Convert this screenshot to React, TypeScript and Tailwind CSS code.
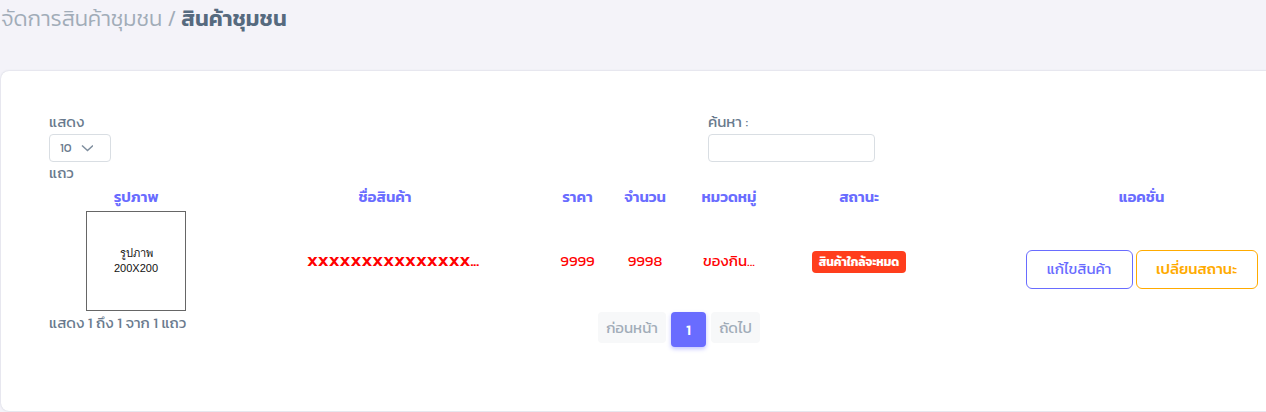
const headings = ['รูปภาพ', 'ชื่อสินค้า', 'ราคา', 'จำนวน', 'หมวดหมู่', 'สถานะ', 'แอคชั่น'];

export default function App() {
  return (
    <div className="min-h-screen overflow-hidden bg-[#f4f3f9] font-['Kanit','Noto_Sans_Thai','Noto_Sans',sans-serif] text-[15px] leading-[23px] text-[#697a8d]">
      <h1 className="mb-[33px] whitespace-nowrap pl-px text-[22px] leading-[38px] font-semibold text-[#566a7f]">
        <span className="font-light text-[#a1acb8]">จัดการสินค้าชุมชน /</span> สินค้าชุมชน
      </h1>
      <main className="ml-px -mr-[123px] rounded-lg bg-white px-12 pt-[39px] pb-16 shadow-[0_0_2px_rgba(67,89,113,0.25)]">
        <div className="grid grid-cols-2 gap-[26px]">
          <div className="flex flex-col items-start">
            <label htmlFor="rows" className="mb-px">แสดง</label>
            <div className="relative">
              <select id="rows" className="block h-7 w-[62px] appearance-none rounded border border-[#d9dee3] bg-white pl-[10px] text-xs text-[#697a8d]">
                <option>10</option>
              </select>
              <svg className="pointer-events-none absolute top-2 left-8 size-3" viewBox="0 0 12 12" fill="none" stroke="#697a8d" strokeOpacity="0.85" strokeWidth="1.5">
                <path d="M1 3.5 6.5 8.5 12 3.5" />
              </svg>
            </div>
            <span className="leading-[21px]">แถว</span>
          </div>
          <div className="flex flex-col items-start">
            <label htmlFor="search" className="mb-px">ค้นหา :</label>
            <input id="search" type="search" className="h-7 w-[167px] rounded border border-[#d9dee3] px-2 text-xs" />
          </div>
        </div>
        <table className="w-full table-fixed text-center whitespace-nowrap">
          <colgroup>
            <col className="w-[174px]" />
            <col className="w-[324px]" />
            <col className="w-[61px]" />
            <col className="w-[74px]" />
            <col className="w-[94px]" />
            <col className="w-[166px]" />
            <col />
          </colgroup>
          <thead>
            <tr className="h-7 text-[#696cff]">
              {headings.map((h) => (
                <th key={h} className="p-0 pb-0.5 font-semibold">{h}</th>
              ))}
            </tr>
          </thead>
          <tbody>
            <tr className="text-[#ff0000]">
              <td className="p-0">
                <svg className="mx-auto block size-[100px]" viewBox="0 0 100 100" role="img" aria-label="รูปภาพ 200X200">
                  <rect x="0.5" y="0.5" width="99" height="99" fill="white" stroke="#666" />
                  <text x="50" y="46" textAnchor="middle" fontSize="11" fontFamily="Liberation Sans, sans-serif" fill="#111">รูปภาพ</text>
                  <text x="50" y="61" textAnchor="middle" fontSize="11" fontFamily="Liberation Sans, sans-serif" fill="#111">200X200</text>
                </svg>
              </td>
              <td className="p-0 pb-px pl-4 font-semibold">XXXXXXXXXXXXXXX...</td>
              <td className="p-0 pb-px">9999</td>
              <td className="p-0 pb-px">9998</td>
              <td className="p-0 pb-px">ของกิน...</td>
              <td className="p-0">
                <span className="inline-flex h-[22px] items-center rounded bg-[#ff3e1d] px-[7px] text-xs font-bold text-white">สินค้าใกล้จะหมด</span>
              </td>
              <td className="p-0 pt-4">
                <div className="flex justify-center gap-[3px]">
                  <button className="h-[39px] w-[107px] rounded-md border border-[#696cff] pb-px text-[#696cff]">แก้ไขสินค้า</button>
                  <button className="h-[39px] w-[122px] rounded-md border border-[#ffab00] pb-px font-medium text-[#ffab00]">เปลี่ยนสถานะ</button>
                </div>
              </td>
            </tr>
          </tbody>
        </table>
        <div className="flex items-start">
          <p className="w-[549px]">แสดง 1 ถึง 1 จาก 1 แถว</p>
          <nav className="flex items-start gap-[5px] pt-px" aria-label="หน้า">
            <button disabled className="h-[31px] w-[68px] rounded bg-[#f7f8f9] text-[#a1acb8]">ก่อนหน้า</button>
            <button className="size-[35px] rounded bg-[#696cff] font-medium text-white shadow-[0_2px_4px_rgba(105,108,255,0.4)]">1</button>
            <button disabled className="h-[31px] w-[49px] rounded bg-[#f7f8f9] text-[#a1acb8]">ถัดไป</button>
          </nav>
        </div>
      </main>
    </div>
  );
}
